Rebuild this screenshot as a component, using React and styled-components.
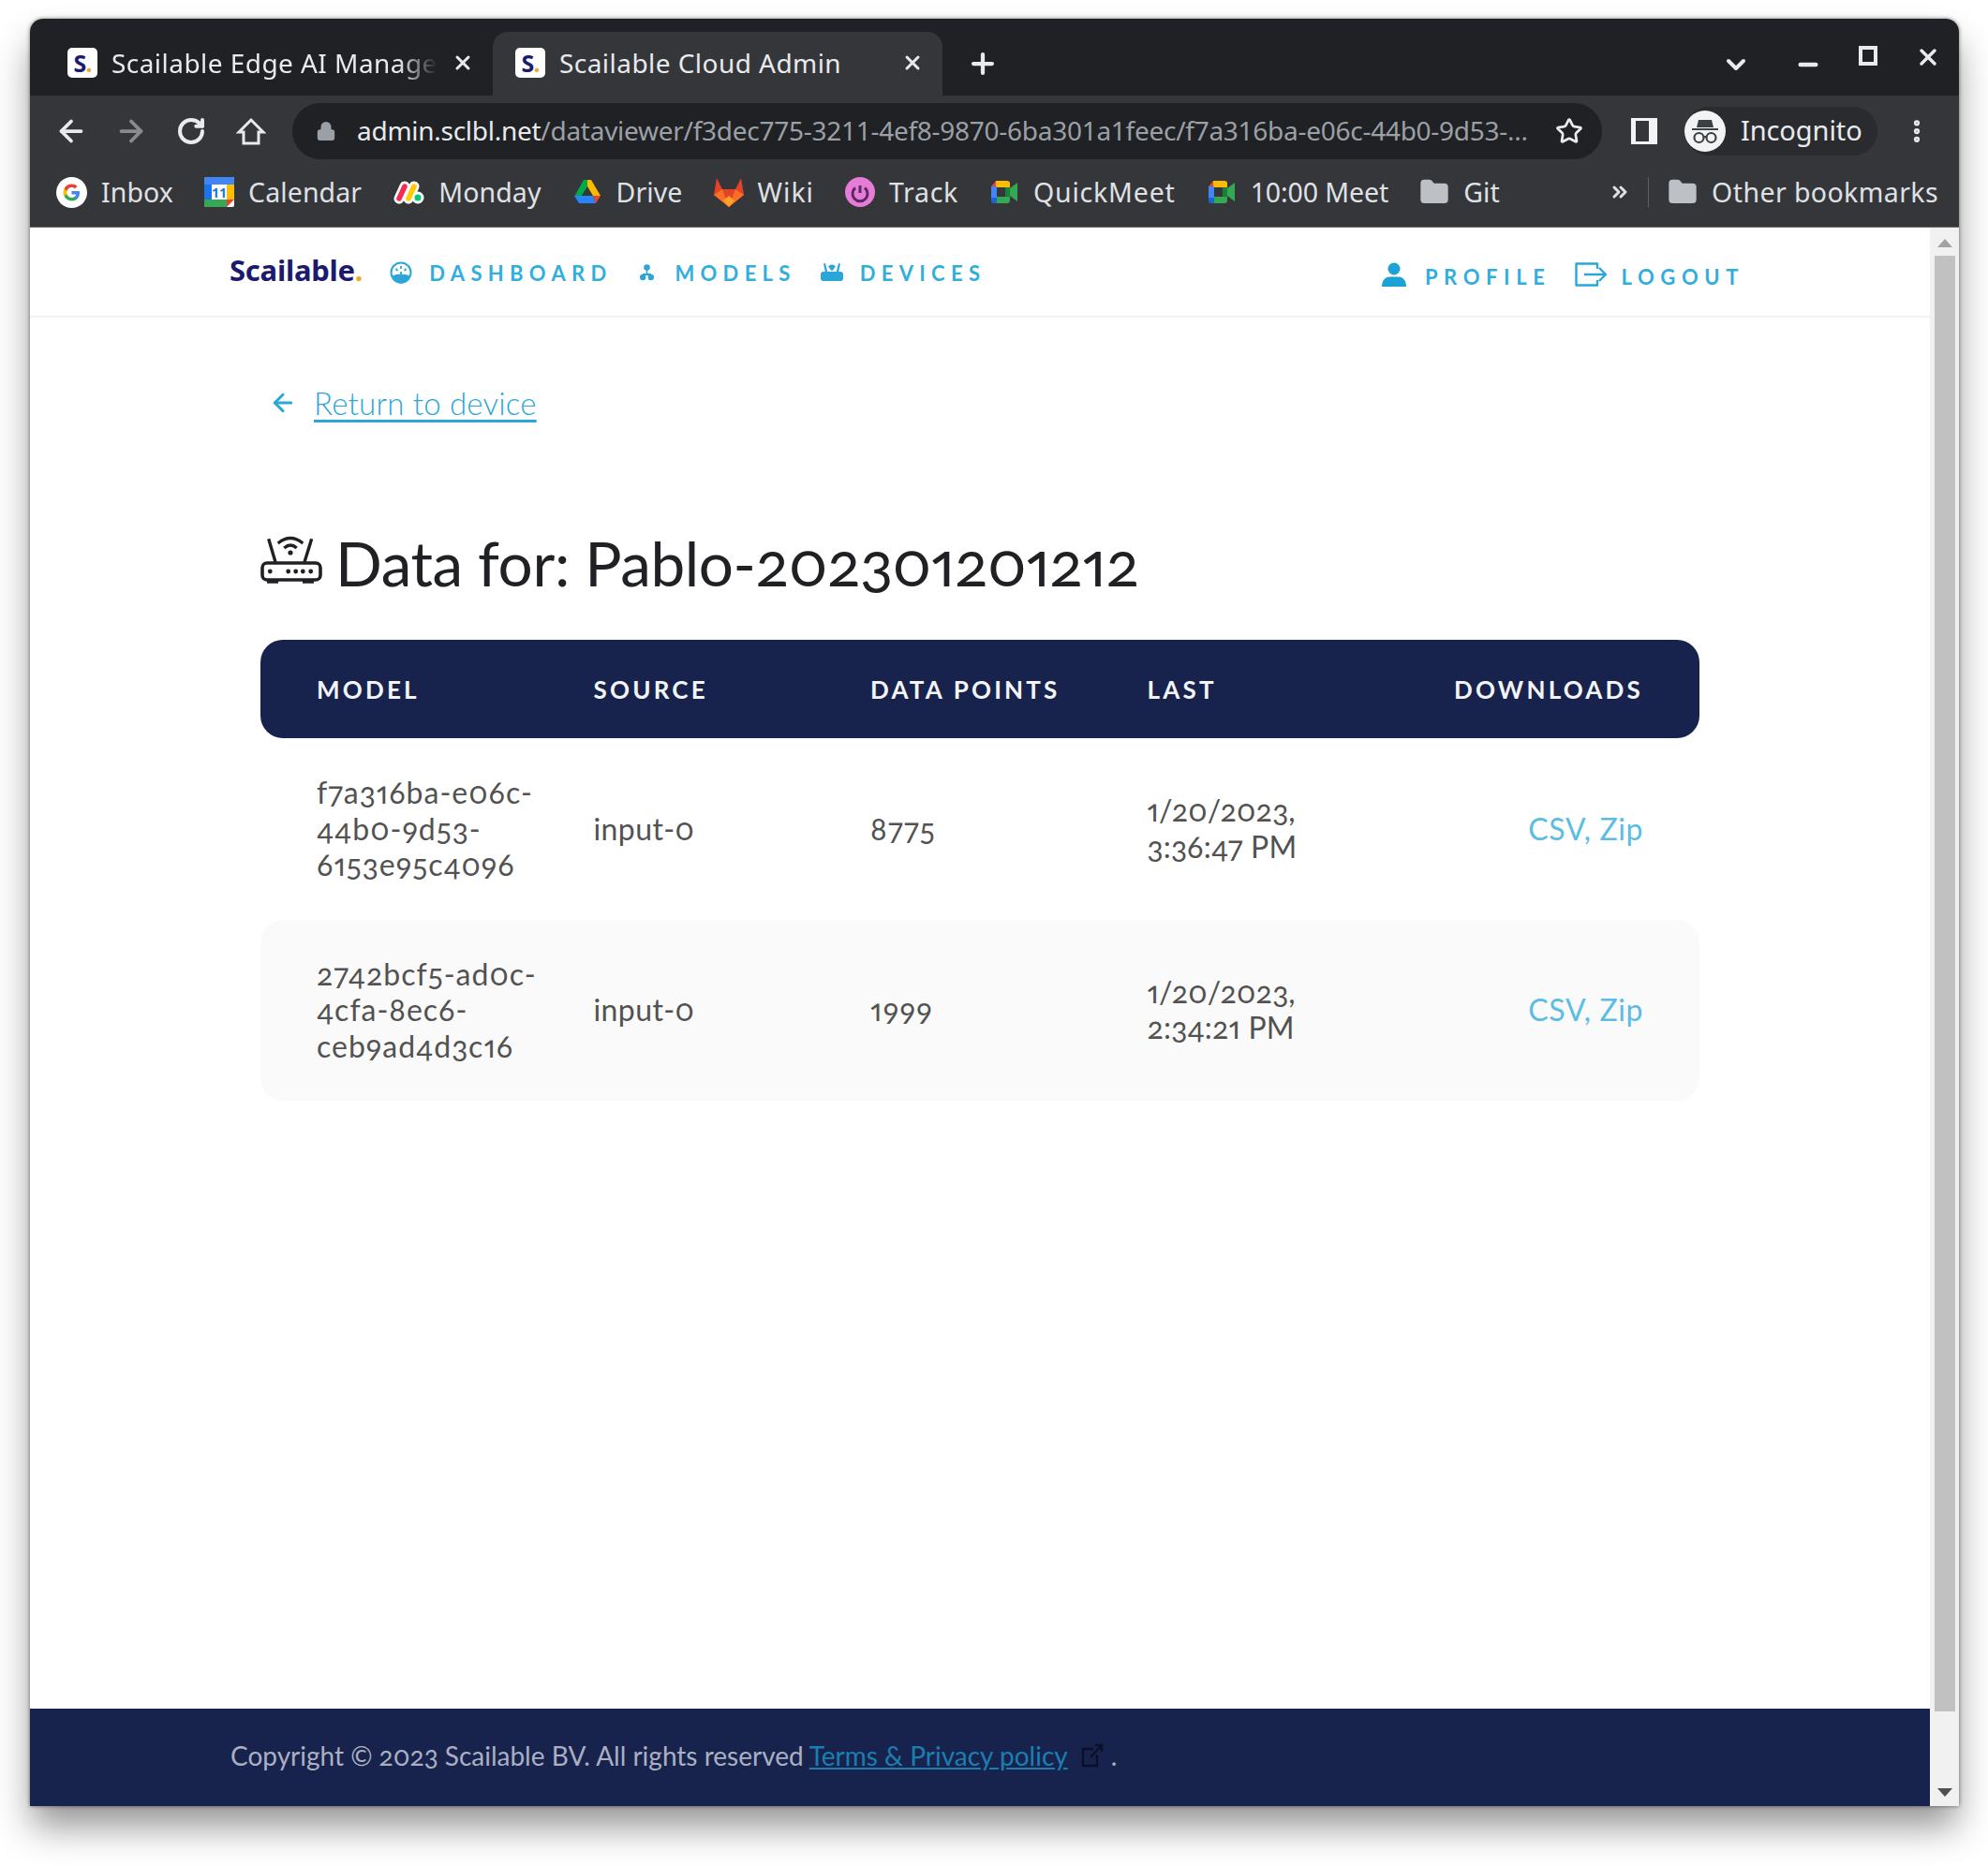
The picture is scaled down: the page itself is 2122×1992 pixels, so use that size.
import styled, { createGlobalStyle } from 'styled-components';
import { ArrowLeft, ArrowRight, RotateCw, Star, X, Plus, ChevronDown, Minus, Lock, MoreVertical, ChevronsRight, Folder } from 'lucide-react';

const GlobalStyle = createGlobalStyle`
  html, body {
    margin: 0;
    padding: 0;
    background: #fff;
  }
  * { box-sizing: border-box; }
`;

const chromeFont = `"Noto Sans", "Open Sans", sans-serif`;
const pageFont = `Lato, "Open Sans", sans-serif`;

const Stage = styled.div`
  width: 2122px;
  height: 1992px;
  padding: 20px 31px 64px 32px;
  overflow: hidden;
`;

const Win = styled.div`
  height: 100%;
  display: flex;
  flex-direction: column;
  border-radius: 14px 14px 0 0;
  box-shadow: 0 24px 38px -2px rgba(0, 0, 0, 0.42), 0 0 4px rgba(0, 0, 0, 0.5);
  background: #fff;
`;

const TabStrip = styled.div`
  height: 82px;
  flex: none;
  display: flex;
  align-items: flex-end;
  padding-left: 28px;
  background: #202124;
  border-radius: 14px 14px 0 0;
  color: #e8eaed;
`;

const Tab = styled.div`
  width: ${(p) => (p.$active ? '480px' : '466px')};
  height: 68px;
  display: flex;
  align-items: center;
  gap: 15px;
  padding: 0 20px 2px ${(p) => (p.$active ? '24px' : '12px')};
  border-radius: 16px 16px 0 0;
  background: ${(p) => (p.$active ? '#35363a' : 'transparent')};
  font-family: ${chromeFont};
  font-size: 28px;
`;

const Favicon = styled.span`
  width: 32px;
  height: 32px;
  flex: none;
  border-radius: 5px;
  background: #fff;
  color: #1c1a6e;
  font-family: "Noto Sans", sans-serif;
  font-weight: 700;
  font-size: 25px;
  line-height: 32px;
  text-align: center;
  letter-spacing: -1px;
  i { color: #f5a623; font-style: normal; }
`;

const TabTitle = styled.span`
  flex: 1;
  white-space: nowrap;
  overflow: hidden;
  letter-spacing: 0.45px;
  ${(p) => p.$fade && 'mask-image: linear-gradient(to right, #000 88%, transparent 100%);'}
`;

const WinControls = styled.div`
  margin-left: auto;
  align-self: stretch;
  display: flex;
  align-items: center;
  gap: 38px;
  padding: 0 19px 0 0;
`;

const LowControl = styled.span`
  display: flex;
  margin: 16px ${(p) => p.$after || 0}px 0 0;
`;

const NewTab = styled.span`
  display: flex;
  margin: 0 0 17px 26px;
`;

const Toolbar = styled.div`
  height: 70px;
  flex: none;
  display: flex;
  align-items: center;
  padding: 6px 0 0 12px;
  background: #35363a;
  color: #e8eaed;
  font-family: ${chromeFont};
`;

const ToolBtn = styled.span`
  width: 64px;
  flex: none;
  display: flex;
  justify-content: center;
  margin-left: ${(p) => p.$ml || 0}px;
  color: ${(p) => (p.$off ? '#8a8b8e' : '#e8eaed')};
`;

const Omnibox = styled.div`
  width: 1398px;
  height: 60px;
  margin-left: 12px;
  display: flex;
  align-items: center;
  padding: 0 20px 0 25px;
  border-radius: 30px;
  background: #202124;
  font-size: 28px;
`;

const Url = styled.span`
  flex: 1;
  margin-left: 22px;
  padding-bottom: 2px;
  white-space: nowrap;
  overflow: hidden;
  letter-spacing: -0.27px;
  color: #9aa0a6;
  b { font-weight: 400; color: #e8eaed; }
`;

const Profile = styled.div`
  height: 52px;
  width: 206px;
  margin-left: 11px;
  display: flex;
  align-items: center;
  gap: 16px;
  border-radius: 26px;
  background: #2a2b2f;
  font-size: 29px;
  letter-spacing: -0.1px;
`;

const ProfileName = styled.span`
  margin-bottom: 3px;
`;

const Avatar = styled.span`
  width: 44px;
  height: 44px;
  flex: none;
  display: flex;
  align-items: center;
  justify-content: center;
  border-radius: 50%;
  background: #f1f3f4;
`;

const Bookmarks = styled.div`
  height: 71px;
  flex: none;
  display: flex;
  align-items: center;
  gap: 33px;
  padding: 0 22px 4px 28px;
  background: #35363a;
  border-bottom: 1px solid #6b6c70;
  color: #dfe1e5;
  font-family: ${chromeFont};
  font-size: 28.5px;
`;

const Mark = styled.span`
  display: flex;
  align-items: center;
  gap: 15px;
  white-space: nowrap;
  letter-spacing: ${(p) => p.$spacing ?? 0.1}px;
  svg { flex: none; }
`;

const Overflow = styled.span`
  display: flex;
  margin-left: auto;
  margin-right: -15px;
`;

const Divider = styled.span`
  width: 1px;
  height: 32px;
  margin-right: -13px;
  background: #5f6064;
`;

const Viewport = styled.div`
  flex: 1;
  min-height: 0;
  display: flex;
`;

const Main = styled.div`
  flex: 1;
  min-width: 0;
  display: flex;
  flex-direction: column;
  font-family: ${pageFont};
  font-variant-numeric: oldstyle-nums proportional-nums;
`;

const Nav = styled.nav`
  height: 96px;
  flex: none;
  display: flex;
  align-items: center;
  padding: 2px 198px 0 213px;
  border-bottom: 2px solid #f2f2f2;
`;

const Logo = styled.span`
  font-family: "Noto Sans", sans-serif;
  font-weight: 700;
  font-size: 31px;
  letter-spacing: -0.25px;
  color: #1c1a6e;
  margin: 0 29px 6px 0;
  i { color: #f5a623; font-style: normal; }
`;

const NavLink = styled.a`
  display: flex;
  align-items: center;
  gap: ${(p) => p.$gap || 18}px;
  margin-right: ${(p) => p.$after || 0}px;
  font-size: 22px;
  font-weight: 700;
  letter-spacing: ${(p) => p.$tracking || 6.3}px;
  color: #31aede;
  white-space: nowrap;
`;

const NavRight = styled.div`
  margin-left: auto;
  display: flex;
  align-items: center;
  gap: 26px;
  padding-top: 8px;
  svg { margin-top: -5px; }
`;

const Content = styled.main`
  flex: 1;
  padding: 68px 246px 0;
`;

const Back = styled.div`
  display: flex;
  align-items: center;
  gap: 18px;
  padding-left: 9px;
  font-size: 33px;
  line-height: 46px;
  font-weight: 300;
  letter-spacing: 0.2px;
  color: #2aa7d8;
  a { text-decoration: underline; text-underline-offset: 5px; }
`;

const Heading = styled.h1`
  display: flex;
  align-items: center;
  gap: 14px;
  margin: 106px 0 40px;
  font-size: 65.6px;
  line-height: 84px;
  font-weight: 400;
  color: #202124;
  letter-spacing: -0.4px;
  svg { margin-top: -6px; flex: none; }
`;

const TableHead = styled.div`
  height: 105px;
  display: grid;
  grid-template-columns: repeat(4, 295.5px) 1fr;
  align-items: center;
  padding: 0 60px;
  border-radius: 24px;
  background: #18234d;
  color: #f3f4f7;
  font-size: 26px;
  font-weight: 700;
  letter-spacing: 3.2px;
`;

const HeadRight = styled.span`
  text-align: right;
  white-space: nowrap;
`;

const Row = styled.div`
  height: 193.5px;
  display: grid;
  grid-template-columns: repeat(4, 295.5px) 1fr;
  align-items: center;
  padding: 0 60px;
  border-radius: 24px;
  background: ${(p) => (p.$shaded ? '#fafafa' : 'transparent')};
  color: #525252;
  font-size: 32px;
  line-height: 38.5px;
  font-weight: 400;
`;

const Cell = styled.span`
  max-width: 240px;
  overflow-wrap: anywhere;
  letter-spacing: ${(p) => p.$spacing || 0}px;
`;

const Links = styled.span`
  text-align: right;
  color: #5cbde3;
  letter-spacing: 0.6px;
`;

const Foot = styled.footer`
  height: 104px;
  flex: none;
  display: flex;
  align-items: center;
  padding: 0 0 5px 214px;
  background: #18234d;
  color: #aab0c2;
  font-size: 28px;
  letter-spacing: 0;
  white-space: nowrap;
  a {
    color: #1a7fb0;
    text-decoration: underline;
    margin-left: 6px;
  }
`;

const FootIcon = styled.span`
  display: flex;
  margin: 0 8px 0 14px;
  color: #0a1028;
`;

const ScrollBar = styled.div`
  width: 31px;
  flex: none;
  display: flex;
  flex-direction: column;
  align-items: center;
  padding: 12px 0 10px;
  background: #f1f1f1;
`;

const Thumb = styled.div`
  flex: 1;
  width: 22px;
  margin: 9px 0 82px;
  background: #c1c1c1;
`;

const Caret = styled.span`
  width: 0;
  height: 0;
  border-left: 8px solid transparent;
  border-right: 8px solid transparent;
  ${(p) => (p.$down ? 'border-top: 9px solid #505050;' : 'border-bottom: 9px solid #a3a3a3;')}
`;

const HomeIcon = () => (
  <svg width="32" height="32" viewBox="0 0 32 32" fill="none" stroke="currentColor" strokeWidth="3">
    <path d="M16 4 L3 17 H8 V29 H24 V17 H29 Z" strokeLinejoin="miter" />
  </svg>
);

const PanelIcon = () => (
  <svg width="28" height="28" viewBox="0 0 28 28">
    <path fillRule="evenodd" d="M0 0h28v28H0zM5 3v22h14V3z" fill="#f1f3f4" />
  </svg>
);

const GoogleIcon = () => (
  <svg width="33" height="33" viewBox="0 0 33 33">
    <circle cx="16.5" cy="16.5" r="16.5" fill="#fff" />
    <path d="M25 16.8c0-.7-.1-1.3-.2-1.9h-8.3v3.5h4.8c-.2 1.1-.8 2-1.8 2.7v2.2h2.9c1.7-1.6 2.6-3.9 2.6-6.5z" fill="#4285f4" />
    <path d="M16.5 25.5c2.4 0 4.4-.8 5.9-2.2l-2.9-2.2c-.8.5-1.8.9-3 .9-2.3 0-4.3-1.6-5-3.7h-3v2.3c1.5 3 4.5 4.9 8 4.9z" fill="#34a853" />
    <path d="M11.5 18.3c-.4-1.1-.4-2.5 0-3.6v-2.3h-3c-1.3 2.5-1.3 5.7 0 8.2z" fill="#fbbc05" />
    <path d="M16.5 11.1c1.3 0 2.5.4 3.4 1.3l2.6-2.6c-1.6-1.5-3.6-2.3-6-2.3-3.5 0-6.5 1.9-8 4.9l3 2.3c.7-2.1 2.7-3.6 5-3.6z" fill="#ea4335" />
  </svg>
);

const CalendarIcon = () => (
  <svg width="32" height="32" viewBox="0 0 32 32">
    <rect width="32" height="32" rx="2" fill="#fff" />
    <path d="M0 2a2 2 0 0 1 2-2h6v32H2a2 2 0 0 1-2-2z" fill="#1a73e8" />
    <path d="M2 0h28a2 2 0 0 1 2 2v6H0V2a2 2 0 0 1 2-2z" fill="#4285f4" />
    <path d="M24 8h8v16h-8z" fill="#fbbc04" />
    <path d="M0 24h24v8H2a2 2 0 0 1-2-2z" fill="#34a853" />
    <path d="M24 24h8l-8 8z" fill="#ea4335" />
    <text x="16" y="22" fontSize="14" fontWeight="700" textAnchor="middle" fill="#1a73e8" fontFamily="Noto Sans">11</text>
  </svg>
);

const MondayIcon = () => (
  <svg width="34" height="32" viewBox="0 -2 34 32" strokeLinecap="round" fill="none">
    <path d="M7 21 L13 8M17 21 L23 8" stroke="#fff" strokeWidth="11" />
    <circle cx="27" cy="20" r="6.5" fill="#fff" />
    <path d="M7 21 L13 8" stroke="#f62b54" strokeWidth="5.5" />
    <path d="M17 21 L23 8" stroke="#ffcc00" strokeWidth="5.5" />
    <circle cx="27" cy="20" r="3.5" fill="#00ca72" />
  </svg>
);

const DriveIcon = () => (
  <svg width="32" height="32" viewBox="-2 -3 32 32">
    <path d="M10 0h8l10 17h-8L14 7z" fill="#ffba00" />
    <path d="M10 0h4v7L7 18H0z" fill="#00ac47" />
    <path d="M0 17h20l3 8H5z" fill="#2684fc" />
    <path d="M20 17h8l-5 8z" fill="#ea4335" />
  </svg>
);

const GitlabIcon = () => (
  <svg width="32" height="32" viewBox="0 0 32 32">
    <path d="M3 1 9 13H23L29 1 32 19 16 32 0 19z" fill="#e24329" />
    <path d="M0 19 9 13 16 32zM32 19 23 13 16 32z" fill="#fc6d26" />
    <path d="M10 25 16 32 22 25 16 20z" fill="#fca326" />
  </svg>
);

const TrackIcon = () => (
  <svg width="32" height="32" viewBox="0 0 32 32" fill="none">
    <circle cx="16" cy="16" r="16" fill="#e57cd8" />
    <path d="M11 11.5a8 8 0 1 0 10 0M16 9v8" stroke="#5a2a5f" strokeWidth="3" />
  </svg>
);

const MeetIcon = () => (
  <svg width="32" height="32" viewBox="-2 -4 32 32">
    <path d="M5 0H17a3 3 0 0 1 3 3V7H5z" fill="#fbbc04" />
    <path d="M5 0 0 6H5z" fill="#ea4335" />
    <path d="M0 6H6V18H0z" fill="#4285f4" />
    <path d="M0 18H6V24H3a3 3 0 0 1-3-3z" fill="#1967d2" />
    <path d="M6 17H20V21a3 3 0 0 1-3 3H6z" fill="#34a853" />
    <path d="M15 7H20V17H15z" fill="#188038" />
    <path d="M20 8 28 2V22L20 16z" fill="#34a853" />
  </svg>
);

const IncognitoIcon = () => (
  <svg width="34" height="34" viewBox="0 0 34 34" fill="none">
    <path d="M10 5h14l2 8H8z" fill="#3c4043" />
    <path d="M3 14h28v2H3z" fill="#3c4043" />
    <circle cx="10.5" cy="24" r="5" stroke="#3c4043" strokeWidth="2.2" />
    <circle cx="23.5" cy="24" r="5" stroke="#3c4043" strokeWidth="2.2" />
    <path d="M15 23h4" stroke="#3c4043" strokeWidth="2" />
  </svg>
);

const GaugeIcon = () => (
  <svg width="24" height="24" viewBox="0 0 24 24" fill="none">
    <circle cx="12" cy="12" r="10.5" stroke="#2aa7d8" strokeWidth="2" />
    <path d="M2 16c3-3 17-3 20 0-1 5-6 7.5-10 7.5S3 21 2 16z" fill="#2aa7d8" />
    <path d="M12 5v3M6.5 8l2 2M17.5 8l-2 2M12 11v3" stroke="#2aa7d8" strokeWidth="1.8" />
  </svg>
);

const ModelsIcon = () => (
  <svg width="15" height="18" viewBox="0 0 15 18" fill="#2aa7d8">
    <circle cx="7.5" cy="3.5" r="3.3" />
    <path d="M6.7 6h1.600v4H12v2H3v-2h3.700z" />
    <circle cx="3.2" cy="14" r="3.2" />
    <circle cx="11.8" cy="14" r="3.2" />
  </svg>
);

const DevicesIcon = () => (
  <svg width="24" height="20" viewBox="0 0 24 20" fill="#2aa7d8">
    <path d="M5 0 7.500 10H5L3 .5zM19 0 16.500 10H19L21 .5z" />
    <path d="M12 1.500a5 5 0 0 1 4 2l-4 5-4-5a5 5 0 0 1 4-2z" />
    <rect x="0" y="9" width="24" height="10" rx="3" />
  </svg>
);

const UserIcon = () => (
  <svg width="26" height="26" viewBox="0 0 26 26" fill="#1ba3d6">
    <circle cx="13" cy="7" r="6.5" />
    <path d="M0 26c0-7 4-10.500 8-10.500h10c4 0 8 3.500 8 10.500z" />
  </svg>
);

const LogoutIcon = () => (
  <svg width="34" height="26" viewBox="0 0 34 26" fill="none" stroke="#2aa7d8" strokeWidth="2.4" strokeLinejoin="round">
    <path d="M24 7V1.500H1.500v23H24V19" />
    <path d="M10 13h22M26 6l7 7-7 7" />
  </svg>
);

const RouterIcon = () => (
  <svg width="66" height="52" viewBox="0 0 66 52" fill="none" stroke="#202124">
    <rect x="2" y="29" width="62" height="18" rx="5" strokeWidth="3.6" />
    <path d="M8.700 3.300 16 28M54.700 3.300 47 28" strokeWidth="3.4" />
    <path d="M18.700 8Q32-3 45.300 8M25.300 13Q32 7 38.700 13" strokeWidth="3.2" />
    <g fill="#202124" stroke="none">
      <circle cx="32" cy="18" r="2.6" />
      <circle cx="10.3" cy="38" r="2.4" />
      <circle cx="29.7" cy="38" r="2.4" />
      <circle cx="37.7" cy="38" r="2.4" />
      <circle cx="45.3" cy="38" r="2.4" />
      <circle cx="53.7" cy="38" r="2.4" />
    </g>
    <path d="M7 49h12M45 49h12" strokeWidth="3.4" />
  </svg>
);

const ExternalIcon = () => (
  <svg width="24" height="26" viewBox="0 0 24 26" fill="none" stroke="currentColor" strokeWidth="2.4">
    <path d="M13 6H2v18h15V12M10 15 22 2M15 2h7v7" />
  </svg>
);

const rows = [
  { id: 'f7a316ba-e06c-44b0-9d53-6153e95c4096', points: '8775', last: '1/20/2023, 3:36:47 PM' },
  { id: '2742bcf5-ad0c-4cfa-8ec6-ceb9ad4d3c16', points: '1999', last: '1/20/2023, 2:34:21 PM' },
];

const bookmarks = [
  { label: 'Inbox', icon: <GoogleIcon /> },
  { label: 'Calendar', icon: <CalendarIcon /> },
  { label: 'Monday', icon: <MondayIcon /> },
  { label: 'Drive', icon: <DriveIcon /> },
  { label: 'Wiki', icon: <GitlabIcon />, spacing: 1 },
  { label: 'Track', icon: <TrackIcon />, spacing: 0.7 },
  { label: 'QuickMeet', icon: <MeetIcon />, spacing: 0.8 },
  { label: '10:00 Meet', icon: <MeetIcon />, spacing: -0.1 },
  { label: 'Git', icon: <Folder size={32} fill="#bdc1c6" stroke="#bdc1c6" /> },
];

const App = () => (
  <Stage>
    <GlobalStyle />
    <Win>
      <TabStrip>
        <Tab>
          <Favicon>S<i>.</i></Favicon>
          <TabTitle $fade>Scailable Edge AI Manager</TabTitle>
          <X size={24} strokeWidth={3} />
        </Tab>
        <Tab $active>
          <Favicon>S<i>.</i></Favicon>
          <TabTitle>Scailable Cloud Admin</TabTitle>
          <X size={24} strokeWidth={3} />
        </Tab>
        <NewTab><Plus size={34} strokeWidth={3} /></NewTab>
        <WinControls>
          <LowControl $after={9}><ChevronDown size={32} strokeWidth={3} /></LowControl>
          <LowControl><Minus size={28} strokeWidth={4} /></LowControl>
          <svg width="24" height="28" viewBox="0 0 24 28" fill="none" stroke="currentColor" strokeWidth="4"><rect x="4" y="4" width="16" height="17" /></svg>
          <X size={28} strokeWidth={3} />
        </WinControls>
      </TabStrip>

      <Toolbar>
        <ToolBtn><ArrowLeft size={36} strokeWidth={2.5} /></ToolBtn>
        <ToolBtn $off><ArrowRight size={36} strokeWidth={2.5} /></ToolBtn>
        <ToolBtn><RotateCw size={32} strokeWidth={3} /></ToolBtn>
        <ToolBtn><HomeIcon /></ToolBtn>
        <Omnibox>
          <Lock size={22} fill="#9aa0a6" stroke="#9aa0a6" />
          <Url><b>admin.sclbl.net</b>/dataviewer/f3dec775-3211-4ef8-9870-6ba301a1feec/f7a316ba-e06c-44b0-9d53-...</Url>
          <Star size={30} strokeWidth={2.2} />
        </Omnibox>
        <ToolBtn $ml={13}><PanelIcon /></ToolBtn>
        <Profile>
          <Avatar><IncognitoIcon /></Avatar>
          <ProfileName>Incognito</ProfileName>
        </Profile>
        <ToolBtn $ml={10}><MoreVertical size={30} strokeWidth={3} /></ToolBtn>
      </Toolbar>

      <Bookmarks>
        {bookmarks.map((b) => (
          <Mark key={b.label} $spacing={b.spacing}>{b.icon}{b.label}</Mark>
        ))}
        <Overflow><ChevronsRight size={24} strokeWidth={3} /></Overflow>
        <Divider />
        <Mark $spacing={0.4}><Folder size={32} fill="#bdc1c6" stroke="#bdc1c6" />Other bookmarks</Mark>
      </Bookmarks>

      <Viewport>
        <Main>
          <Nav>
            <Logo>Scailable<i>.</i></Logo>
            <NavLink $after={30}><GaugeIcon />DASHBOARD</NavLink>
            <NavLink $after={26} $gap={22}><ModelsIcon />MODELS</NavLink>
            <NavLink><DevicesIcon />DEVICES</NavLink>
            <NavRight>
              <NavLink $gap={20} $tracking={6.6}><UserIcon />PROFILE</NavLink>
              <NavLink $gap={15} $tracking={6.6}><LogoutIcon />LOGOUT</NavLink>
            </NavRight>
          </Nav>

          <Content>
            <Back>
              <ArrowLeft size={30} strokeWidth={2.4} />
              <a>Return to device</a>
            </Back>
            <Heading><RouterIcon />Data for: Pablo-202301201212</Heading>
            <TableHead>
              <span>MODEL</span>
              <span>SOURCE</span>
              <span>DATA POINTS</span>
              <span>LAST</span>
              <HeadRight>DOWNLOADS</HeadRight>
            </TableHead>
            {rows.map((r, i) => (
              <Row key={r.id} $shaded={i === 1}>
                <Cell $spacing={1}>{r.id}</Cell>
                <Cell $spacing={0.4}>input-0</Cell>
                <Cell $spacing={1.3}>{r.points}</Cell>
                <Cell $spacing={0.2}>{r.last}</Cell>
                <Links>CSV, Zip</Links>
              </Row>
            ))}
          </Content>

          <Foot>
            Copyright © 2023 Scailable BV. All rights reserved
            <a>Terms &amp; Privacy policy</a>
            <FootIcon><ExternalIcon /></FootIcon>
            .
          </Foot>
        </Main>
        <ScrollBar>
          <Caret />
          <Thumb />
          <Caret $down />
        </ScrollBar>
      </Viewport>
    </Win>
  </Stage>
);

export default App;
